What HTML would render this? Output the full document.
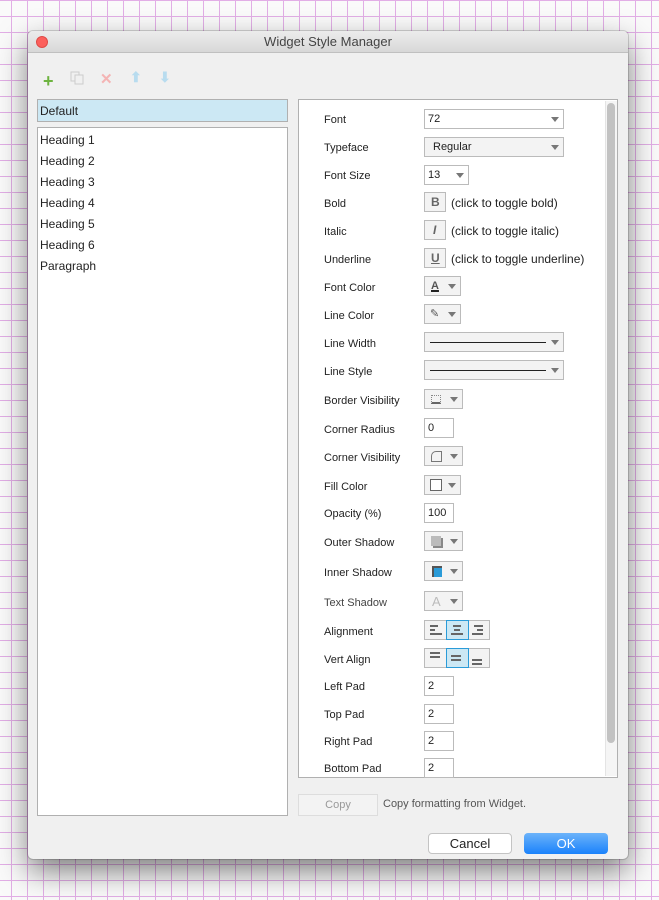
<!DOCTYPE html>
<html><head><meta charset="utf-8"><style>
*{box-sizing:border-box}
body{margin:0;width:659px;height:900px;overflow:hidden;font-family:"Liberation Sans",sans-serif;font-size:12px;color:#222;
background-color:#fafafa;background-image:linear-gradient(90deg,#e2aee6 1px,transparent 1px),linear-gradient(#e2aee6 1px,transparent 1px);background-size:16px 16px;background-position:11px 0,0 0}
.win{position:absolute;left:28px;top:31px;width:600px;height:828px;background:#f0f0f0;border-radius:5px;box-shadow:0 12px 30px rgba(0,0,0,.5),0 0 0 1px rgba(0,0,0,.15);overflow:hidden}
.title{height:22px;background:linear-gradient(#ececec,#d8d8d8);border-bottom:1px solid #c0c0c0;text-align:center;line-height:22px;font-size:13px;color:#444}
.dot{position:absolute;left:8px;top:5px;width:12px;height:12px;border-radius:50%;background:#fc605c;border:1px solid #de4b47}
.a{position:absolute}
.lab{position:absolute;left:296px;font-size:11px;color:#222;margin-top:1px}
.ctl{position:absolute;left:396px;height:20px;border:1px solid #bbb;background:#fff;font-size:11px;line-height:19px;padding-left:3px}
.gr{background:#f3f3f3}
.arr{position:absolute;right:4px;top:7px;width:0;height:0;border-left:4px solid transparent;border-right:4px solid transparent;border-top:5px solid #777}
.txt{position:absolute;left:423px;font-size:12px;color:#222;margin-top:1px}
.list div{height:21px;line-height:22px;padding-left:2px;font-size:12px}
</style></head><body>
<div class="win">
<div class="title">Widget Style Manager</div><div class="dot"></div>
<div class="a" style="left:15px;top:40px;color:#6db33f;font-weight:bold;font-size:18px">+</div>
<svg class="a" style="left:42px;top:40px" width="14" height="14"><rect x="1" y="1" width="8" height="9" fill="none" stroke="#ccc"/><rect x="5" y="4" width="8" height="9" fill="#f0f0f0" stroke="#ccc"/></svg>
<div class="a" style="left:72px;top:39px;color:#f4b4b4;font-size:15px;font-weight:bold">✕</div>
<div class="a" style="left:102px;top:38px;color:#b8dcef;font-size:14px;font-weight:bold">⬆</div>
<div class="a" style="left:131px;top:38px;color:#b8dcef;font-size:14px;font-weight:bold">⬇</div>
<div class="a" style="left:9px;top:68px;width:251px;height:23px;background:#cce8f4;border:1px solid #b0b0b0;line-height:22px;padding-left:2px;font-size:12px">Default</div>
<div class="a list" style="left:9px;top:96px;width:251px;height:689px;background:#fff;border:1px solid #b0b0b0;padding-top:1px">
<div>Heading 1</div><div>Heading 2</div><div>Heading 3</div><div>Heading 4</div><div>Heading 5</div><div>Heading 6</div><div>Paragraph</div></div>
<div class="a" style="left:270px;top:68px;width:320px;height:679px;background:#fff;border:1px solid #b0b0b0"></div>
<div class="a" style="left:577px;top:70px;width:12px;height:675px;background:#f5f5f5;border-left:1px solid #e4e4e4"></div>
<div class="a" style="left:579px;top:72px;width:8px;height:640px;background:#c2c2c2;border-radius:4px"></div>

<div class="lab" style="top:82px">Font</div><div class="ctl" style="top:78px;width:140px">72<span class="arr"></span></div>
<div class="lab" style="top:110px">Typeface</div><div class="ctl gr" style="top:106px;width:140px;padding-left:8px">Regular<span class="arr"></span></div>
<div class="lab" style="top:138px">Font Size</div><div class="ctl" style="top:134px;width:45px">13<span class="arr"></span></div>
<div class="lab" style="top:166px">Bold</div><div class="ctl gr" style="top:161px;width:22px;font-weight:bold;color:#666;padding-left:6px;font-size:12px">B</div><div class="txt" style="top:164px">(click to toggle bold)</div>
<div class="lab" style="top:194px">Italic</div><div class="ctl gr" style="top:189px;width:22px;font-style:italic;font-weight:bold;color:#666;padding-left:8px;font-size:12px">I</div><div class="txt" style="top:192px">(click to toggle italic)</div>
<div class="lab" style="top:222px">Underline</div><div class="ctl gr" style="top:217px;width:22px;text-decoration:underline;font-weight:bold;color:#666;padding-left:6px;font-size:12px">U</div><div class="txt" style="top:220px">(click to toggle underline)</div>
<div class="lab" style="top:250px">Font Color</div><div class="ctl gr" style="top:245px;width:37px;font-weight:bold;color:#555;padding-left:6px;font-size:11px;text-decoration:underline 2px #222">A<span class="arr"></span></div>
<div class="lab" style="top:278px">Line Color</div><div class="ctl gr" style="top:273px;width:37px;color:#555;padding-left:5px">✎<span class="arr"></span></div>
<div class="lab" style="top:306px">Line Width</div><div class="ctl gr" style="top:301px;width:140px"><span class="a" style="left:5px;right:17px;top:9px;border-top:1px solid #222"></span><span class="arr"></span></div>
<div class="lab" style="top:334px">Line Style</div><div class="ctl gr" style="top:329px;width:140px"><span class="a" style="left:5px;right:17px;top:9px;border-top:1px solid #222"></span><span class="arr"></span></div>
<div class="lab" style="top:363px">Border Visibility</div><div class="ctl gr" style="top:358px;width:39px"><span class="a" style="left:6px;top:5px;width:10px;height:9px;border:1px dotted #888;border-bottom:2px solid #666"></span><span class="arr"></span></div>
<div class="lab" style="top:392px">Corner Radius</div><div class="ctl" style="top:387px;width:30px">0</div>
<div class="lab" style="top:420px">Corner Visibility</div><div class="ctl gr" style="top:415px;width:39px"><span class="a" style="left:6px;top:4px;width:11px;height:11px;border:1px solid #777;border-top-left-radius:5px"></span><span class="arr"></span></div>
<div class="lab" style="top:449px">Fill Color</div><div class="ctl gr" style="top:444px;width:37px"><span class="a" style="left:5px;top:3px;width:12px;height:12px;border:1px solid #666;background:#fff"></span><span class="arr"></span></div>
<div class="lab" style="top:476px">Opacity (%)</div><div class="ctl" style="top:472px;width:30px">100</div>
<div class="lab" style="top:505px">Outer Shadow</div><div class="ctl gr" style="top:500px;width:39px"><span class="a" style="left:6px;top:4px;width:10px;height:10px;background:#bbb;box-shadow:2px 2px 0 #888"></span><span class="arr"></span></div>
<div class="lab" style="top:535px">Inner Shadow</div><div class="ctl gr" style="top:530px;width:39px"><span class="a" style="left:7px;top:4px;width:10px;height:11px;background:#2a9bd8;border-left:2px solid #555;border-top:2px solid #555"></span><span class="arr"></span></div>
<div class="lab" style="top:565px;color:#444">Text Shadow</div><div class="ctl gr" style="top:560px;width:39px;color:#bbb;font-size:13px;padding-left:7px">A<span class="arr"></span></div>
<div class="lab" style="top:594px">Alignment</div>
<div class="a" style="left:396px;top:589px;width:66px;height:20px;border:1px solid #bbb;background:#f3f3f3"></div>
<div class="a" style="left:418px;top:589px;width:23px;height:20px;border:1px solid #2a9bd8;background:#cce8f4"></div>
<svg class="a" style="left:396px;top:589px" width="66" height="20" stroke="#666" stroke-width="2"><path d="M6 6h8M6 10h5M6 14h12M29 6h8M30 10h6M27 14h12M50 6h9M53 10h6M48 14h11"/></svg>
<div class="lab" style="top:622px">Vert Align</div>
<div class="a" style="left:396px;top:617px;width:66px;height:20px;border:1px solid #bbb;background:#f3f3f3"></div>
<div class="a" style="left:418px;top:617px;width:23px;height:20px;border:1px solid #2a9bd8;background:#cce8f4"></div>
<svg class="a" style="left:396px;top:617px" width="66" height="20" stroke="#666" stroke-width="2"><path d="M6 5h10M6 9h10M27 8h10M27 12h10M48 12h10M48 16h10"/></svg>
<div class="lab" style="top:649px">Left Pad</div><div class="ctl" style="top:645px;width:30px">2</div>
<div class="lab" style="top:677px">Top Pad</div><div class="ctl" style="top:673px;width:30px">2</div>
<div class="lab" style="top:704px">Right Pad</div><div class="ctl" style="top:700px;width:30px">2</div>
<div class="lab" style="top:731px">Bottom Pad</div><div class="ctl" style="top:727px;width:30px">2</div>

<div class="a" style="left:270px;top:763px;width:80px;height:22px;border:1px solid #ddd;background:#f3f3f3;text-align:center;line-height:21px;font-size:11px;color:#999">Copy</div>
<div class="a" style="left:355px;top:767px;font-size:11px;color:#555">Copy formatting from Widget.</div>
<div class="a" style="left:400px;top:802px;width:84px;height:21px;border:1px solid #c4c4c4;border-radius:4px;background:#fff;text-align:center;line-height:20px;font-size:13px">Cancel</div>
<div class="a" style="left:496px;top:802px;width:84px;height:21px;border-radius:4px;background:linear-gradient(#6cb3fa,#1a82fb);text-align:center;line-height:21px;font-size:13px;color:#fff">OK</div>
</div>
</body></html>
